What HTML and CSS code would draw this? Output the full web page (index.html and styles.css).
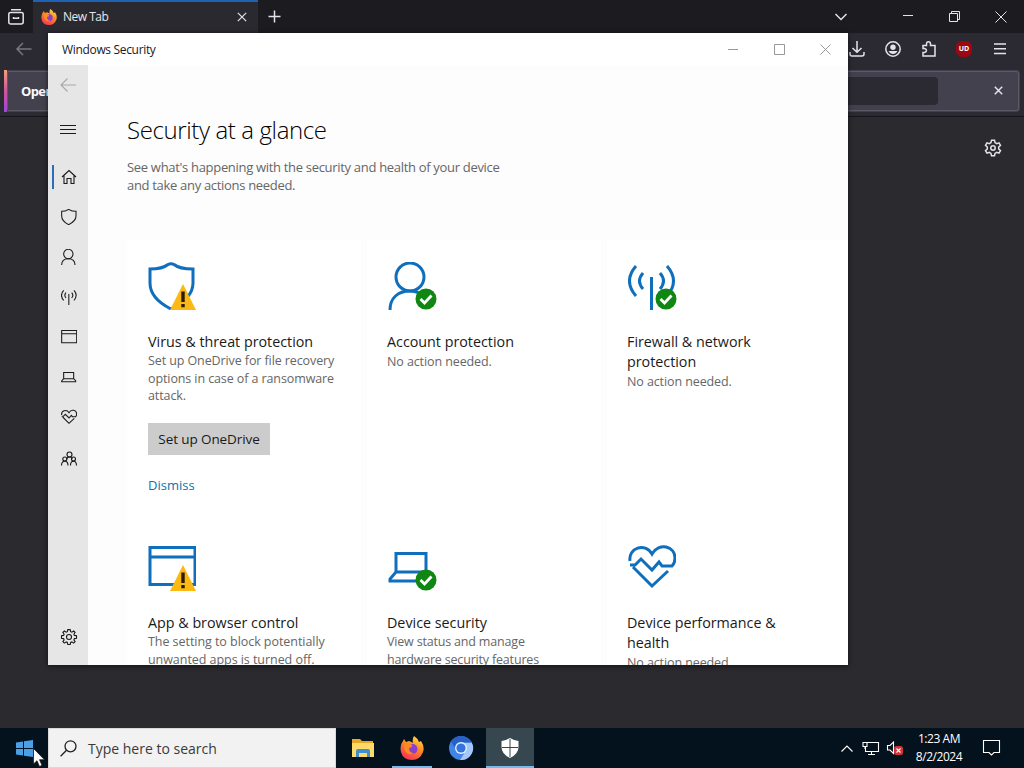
FILE: index.html
```
<!DOCTYPE html>
<html lang="en">
<head>
  <meta charset="UTF-8" />
  <meta name="viewport" content="width=device-width, initial-scale=1.0" />
  <title>Windows Security</title>
  <link rel="stylesheet" href="styles.css">
</head>
<body>

  <!-- icons shared by the side menu and the cards -->
  <svg class="defs" width="0" height="0">
    <symbol id="shield" viewBox="0 0 48 48"><path d="M2 7C11 7 17 5 20 2.500Q23 1 26 2.500C29 5 35 7 45 7V21C45 33 35 41 23 47C11 41 2 33 2 21Z"/></symbol>
    <symbol id="person" viewBox="0 0 48 48"><circle cx="22" cy="15" r="14"/><path d="M2 48C2 36 10 29 22 29S42 36 42 48"/></symbol>
    <symbol id="person-cut" viewBox="0 0 48 48"><circle cx="22" cy="15" r="14"/><path d="M2 48C2 36 10 29 22 29Q29 29 34 33"/></symbol>
    <symbol id="signal" viewBox="0 0 48 48"><path d="M23.500 15V48M15 11Q8 19 15 27M32 11Q39 19 32 27M8 4Q-5 19 8 34M39 4Q52 19 39 34"/></symbol>
    <symbol id="app" viewBox="0 0 48 48"><path d="M2 4.500H47V41.500H2ZM2 14H47"/></symbol>
    <symbol id="laptop" viewBox="0 0 48 48"><path d="M8 10.500H38V29H8ZM8 29L2 36V38H44V35L38 29"/></symbol>
    <symbol id="heart" viewBox="0 0 48 48"><path d="M2 18C0 5 17-1 24 11C31-1 47 3 47 15C47 19 46 21 44 23H34L31 19L24 27L13 16L7 22H2M5 24L24 43L40 28"/></symbol>
  </svg>

  <div class="browser">
    <div class="tabstrip">
      <svg class="archive" width="16" height="16" viewBox="0 0 16 16"><path d="M3 .8H13M2.500 3.500H13.500Q15.200 3.500 15.200 5V13Q15.200 15 13 15H3Q.8 15 .8 13V5Q.8 3.500 2.500 3.500M5.500 8V9.200H10.500V8"/></svg>
      <div class="tab">
        <svg class="fox" width="16" height="16" viewBox="0 0 24 24"><use href="#fox"/></svg>
        <span>New Tab</span>
        <svg class="tab-close" width="10" height="10" viewBox="0 0 10 10"><path d="M.8.800L9.200 9.200M9.200.8L.8 9.200"/></svg>
      </div>
      <svg class="plus" width="13" height="13" viewBox="0 0 13 13"><path d="M6.500.5V12.500M.5 6.500H12.500"/></svg>
      <div class="frame-buttons">
        <svg width="12" height="12" viewBox="0 0 12 12"><path class="thick" d="M.5 3L6 8.500L11.500 3"/></svg>
        <svg class="min" width="11" height="11" viewBox="0 0 11 11"><path d="M0 4.500H10"/></svg>
        <svg width="11" height="11" viewBox="0 0 11 11"><path d="M.5 2.500H8.500V10.500H.5ZM2.500 2.500V.5H10.500V8.500H8.500"/></svg>
        <svg width="12" height="12" viewBox="0 0 12 12"><path d="M.5.5L11.500 11.500M11.500.5L.5 11.500"/></svg>
      </div>
    </div>

    <div class="toolbar">
      <svg class="nav-back" width="16" height="14" viewBox="0 0 16 14"><path d="M15.500 7H1M7 1L1 7L7 13"/></svg>
      <div class="tools">
        <svg width="16" height="16" viewBox="0 0 16 16"><path d="M8 0V11M3.500 7L8 11.300L12.500 7M1 11V13Q1 15 3 15H13Q15 15 15 13V11"/></svg>
        <svg width="16" height="16" viewBox="0 0 16 16"><circle cx="8" cy="8" r="7.200"/><circle class="solid" cx="8" cy="6.200" r="2.700"/><path class="solid" d="M3.500 10H12.500Q11 13 8 13T3.500 10Z"/></svg>
        <svg width="16" height="16" viewBox="0 0 16 16"><path d="M2 15V11.500H3.500Q5.500 11 5.500 9.500T3.500 7.500H2V4.500H5.500V3Q5.500.8 7.500.8T9.500 3V4.500H14V15Z"/></svg>
        <span class="ublock">UD</span>
        <svg width="14" height="14" viewBox="0 0 14 14"><path d="M1 2H13M1 6.800H13M1 11.500H13"/></svg>
      </div>
    </div>

    <div class="notice">
      <strong>Open</strong>
      <div class="notice-field"></div>
      <svg width="9" height="9" viewBox="0 0 9 9"><path d="M.8.800L8.200 8.200M8.200.8L.8 8.200"/></svg>
    </div>

    <div class="newtab">
      <svg width="18" height="18" viewBox="0 0 18 18"><path d="M7.500 1.200H10.500L11 3.600L12.700 4.600L15 3.800L16.500 6.400L14.700 8V10L16.500 11.600L15 14.200L12.700 13.400L11 14.400L10.500 16.800H7.500L7 14.400L5.300 13.400L3 14.200L1.500 11.600L3.300 10V8L1.500 6.400L3 3.800L5.300 4.600L7 3.600Z"/><circle cx="9" cy="9" r="2.200"/></svg>
    </div>
  </div>

  <div class="window">
    <div class="titlebar">
      <span>Windows Security</span>
      <div class="window-buttons">
        <svg width="11" height="11" viewBox="0 0 11 11"><path d="M0 5.500H10"/></svg>
        <svg width="11" height="11" viewBox="0 0 11 11"><path d="M.5.5H10.500V10.500H.5Z"/></svg>
        <svg width="11" height="11" viewBox="0 0 11 11"><path d="M.5.5L10.500 10.500M10.500.5L.5 10.500"/></svg>
      </div>
    </div>

    <div class="window-body">
      <nav class="sidebar">
        <a class="item back"><svg width="16" height="14" viewBox="0 0 16 14"><path d="M16 7H1M7.500 .5L1 7L7.500 13.500"/></svg></a>
        <a class="item menu"><svg width="16" height="9" viewBox="0 0 16 9"><path d="M0 .5H16M0 4.500H16M0 8.500H16"/></svg></a>
        <a class="item active"><svg width="16" height="16" viewBox="0 0 16 16"><path d="M1 8L8 1.500L15 8M3 6.500V14.500H6V9.500H10V14.500H13V6.500"/></svg></a>
        <a class="item"><svg width="16" height="16"><use href="#shield"/></svg></a>
        <a class="item"><svg width="16" height="16"><use href="#person"/></svg></a>
        <a class="item"><svg width="16" height="16"><use href="#signal"/></svg></a>
        <a class="item"><svg width="16" height="16"><use href="#app"/></svg></a>
        <a class="item"><svg width="16" height="16"><use href="#laptop"/></svg></a>
        <a class="item"><svg width="16" height="16"><use href="#heart"/></svg></a>
        <a class="item family"><svg width="16" height="16" viewBox="0 0 16 16"><circle cx="8.500" cy="3.500" r="2.500"/><circle cx="3.800" cy="8" r="2"/><circle cx="12.500" cy="8" r="2"/><path d="M.5 14.500Q.5 10.300 3.800 10.300T7 14.500M9.500 14.500Q9.500 10.300 12.500 10.300T15.500 14.500M5.700 8.500Q6 6 8.500 6T11 8"/></svg></a>
        <a class="item settings"><svg width="16" height="16" viewBox="0 0 16 16"><path d="M6.800.6H9.200L9.600 2.700L10.900 3.200L12.700 2L14.100 3.400L12.900 5.200L13.400 6.400L15.500 6.800V9.200L13.400 9.600L12.900 10.900L14.100 12.700L12.600 14.100L10.900 12.900L9.600 13.400L9.200 15.500H6.800L6.400 13.400L5.200 12.900L3.400 14.100L1.900 12.700L3.100 10.900L2.600 9.600L.5 9.200V6.800L2.600 6.400L3.100 5.200L1.900 3.400L3.400 2L5.200 3.200L6.400 2.700Z"/><circle cx="8" cy="8" r="2.500"/></svg></a>
      </nav>

      <main class="content">
        <h1>Security at a glance</h1>
        <p class="intro">See what's happening with the security and health of your device<br>and take any actions needed.</p>

        <div class="cards">
          <section class="card">
            <div class="card-icon"><svg width="48" height="48"><use href="#shield"/></svg><svg class="badge" width="26" height="26" viewBox="0 0 26 26"><use href="#warn"/></svg></div>
            <h2>Virus &amp; threat protection</h2>
            <p>Set up OneDrive for file recovery<br>options in case of a ransomware<br>attack.</p>
            <button>Set up OneDrive</button>
            <a class="dismiss">Dismiss</a>
          </section>
          <section class="card">
            <div class="card-icon"><svg width="48" height="48"><use href="#person-cut"/></svg><svg class="badge ok" width="22" height="22" viewBox="0 0 22 22"><use href="#check"/></svg></div>
            <h2>Account protection</h2>
            <p>No action needed.</p>
          </section>
          <section class="card">
            <div class="card-icon"><svg width="48" height="48"><use href="#signal"/></svg><svg class="badge ok" width="22" height="22" viewBox="0 0 22 22"><use href="#check"/></svg></div>
            <h2>Firewall &amp; network<br>protection</h2>
            <p>No action needed.</p>
          </section>
          <section class="card">
            <div class="card-icon"><svg width="48" height="48"><use href="#app"/></svg><svg class="badge" width="26" height="26" viewBox="0 0 26 26"><use href="#warn"/></svg></div>
            <h2>App &amp; browser control</h2>
            <p>The setting to block potentially<br>unwanted apps is turned off.</p>
          </section>
          <section class="card">
            <div class="card-icon"><svg width="48" height="48"><use href="#laptop"/></svg><svg class="badge ok" width="22" height="22" viewBox="0 0 22 22"><use href="#check"/></svg></div>
            <h2>Device security</h2>
            <p>View status and manage<br>hardware security features</p>
          </section>
          <section class="card">
            <div class="card-icon"><svg width="48" height="48"><use href="#heart"/></svg></div>
            <h2>Device performance &amp;<br>health</h2>
            <p>No action needed.</p>
          </section>
        </div>
      </main>
    </div>
  </div>

  <div class="taskbar">
    <div class="start">
      <svg width="17" height="17" viewBox="0 0 17 17"><path d="M0 2.400L7 1.400V8H0ZM8 1.200L17 0V8H8ZM0 9H7V15.600L0 14.600ZM8 9H17V17L8 15.800Z"/></svg>
    </div>
    <div class="search">
      <svg width="17" height="17" viewBox="0 0 17 17"><circle cx="10.500" cy="6.300" r="5.500"/><path d="M6.500 10.300L.6 16.300"/></svg>
      <span>Type here to search</span>
    </div>
    <div class="apps">
      <div class="app">
        <svg width="22" height="20" viewBox="0 0 22 20"><path fill="#e8a825" d="M0 1H8L10 3H21V19H0Z"/><path fill="#ffda68" d="M0 5H22V19H0Z"/><path fill="#3f8fd0" d="M4 19V13Q4 11 6 11H16Q18 11 18 13V19H15V15H7V19Z"/></svg>
      </div>
      <div class="app running">
        <svg width="24" height="24" viewBox="0 0 24 24"><use href="#fox"/></svg>
      </div>
      <div class="app">
        <svg width="24" height="24" viewBox="0 0 24 24"><circle cx="12" cy="12" r="12" fill="#4285e8"/><path fill="#a5c8fa" d="M12 6.500H22.700A12 12 0 0 1 11 24L17 14.500Z"/><path fill="#2861c4" d="M2 5.500A12 12 0 0 1 22.700 6.500H12L7 14Z"/><circle cx="12" cy="12" r="6" fill="#e6f0ff"/><circle cx="12" cy="12" r="4.600" fill="#3474dc"/></svg>
      </div>
      <div class="app running current">
        <svg width="18" height="20" viewBox="0 0 18 20"><path fill="#fff" d="M9 0Q13 2.500 17.500 3V9Q17.500 16 9 20Q.5 16 .5 9V3Q5 2.500 9 0Z"/><path stroke="#37474f" d="M9 1V19M1 9.500H17"/></svg>
      </div>
    </div>
    <div class="tray">
      <svg class="chevron" width="12" height="7" viewBox="0 0 12 7"><path d="M.5 6.500L6 1L11.500 6.500"/></svg>
      <svg class="network" width="17" height="14" viewBox="0 0 17 14"><path d="M5.500 1.500H16.500V10.500H3.500V6M9.500 10.500V13.500M6 13.500H13M1 1.500H5V5.500H1ZM3 5.500V8"/></svg>
      <svg class="sound" width="16" height="14" viewBox="0 0 16 14"><path d="M.5 4.500H3L6.500 1V12.500L3 9H.5Z"/><rect x="7" y="5" width="9" height="9" rx="2.500" fill="#d13438" stroke="none"/><path d="M9.500 7.500L13.500 11.500M13.500 7.500L9.500 11.500"/></svg>
      <div class="clock">1:23 AM<br>8/2/2024</div>
      <svg class="action" width="17" height="17" viewBox="0 0 17 17"><path d="M.5 .5H16.500V12.500H11L8.500 15L6 12.500H.5Z"/></svg>
    </div>
  </div>

  <svg class="cursor" width="12" height="19" viewBox="0 0 12 19"><path d="M.5.5V16L4 12.700L6.500 18.500L9 17.300L6.500 11.700H11.500Z"/></svg>

  <svg class="defs" width="0" height="0">
    <linearGradient id="flame" x1=".8" y1="0" x2=".3" y2="1">
      <stop offset="0" stop-color="#ffe24a"/>
      <stop offset=".45" stop-color="#ff8a22"/>
      <stop offset="1" stop-color="#f5315b"/>
    </linearGradient>
    <symbol id="fox" viewBox="0 0 24 24">
      <path fill="url(#flame)" d="M14 0Q18 2.500 19 6L21 5Q25 11 23 16Q20 24 12 24Q3 24 1 16Q-.5 9 3 5L4 3L6 6L9 5Q12 6 13 7Q12 3 14 0Z"/>
      <circle cx="12.500" cy="13" r="5" fill="#8a3fd1"/>
      <path fill="#ff8a22" d="M4 8Q8 6 12 9Q13 11 9 12Q9 17 14 17Q8 20 5 15Z"/>
    </symbol>
    <symbol id="warn" viewBox="0 0 26 26">
      <path fill="#fcb813" stroke="none" d="M13 0L26 26H0Z"/>
      <path fill="#2b1b00" stroke="none" d="M11.300 7.500H14.700V18H11.300ZM11.300 20H14.700V23.300H11.300Z"/>
    </symbol>
    <symbol id="check" viewBox="0 0 22 22">
      <circle cx="11" cy="11" r="10.500" fill="#0f8712" stroke="none"/>
      <path fill="none" stroke="#fff" stroke-width="2.800" d="M5.500 11L9.500 15L16.500 7.500"/>
    </symbol>
  </svg>
</body>
</html>
```
FILE: styles.css
```
* {
  box-sizing: border-box;
}

body {
  margin: 0;
  width: 1024px;
  height: 768px;
  overflow: hidden;
  display: flex;
  flex-direction: column;
  background: #2b2a2f;
  font-family: 'Open Sans', 'Noto Sans', sans-serif;
}

svg {
  display: block;
  flex: none;
  overflow: visible;
}

.defs {
  position: absolute;
}

/* browser behind the window */

.browser {
  flex: 1;
  display: flex;
  flex-direction: column;
  background: #2b2a33;
  color: #e6e6ea;
}

.browser svg:not(.fox) {
  fill: none;
  stroke: #e4e4e8;
  stroke-width: 1.5;
}

.browser .solid {
  fill: #e4e4e8;
  stroke: none;
}

.tabstrip {
  height: 33px;
  display: flex;
  align-items: center;
  padding-left: 8px;
  background: #1c1b20;
}

.tab {
  width: 225px;
  height: 33px;
  margin-left: 9px;
  padding: 0 11px 2px 8px;
  display: flex;
  align-items: center;
  gap: 6px;
  border-top: 2px solid #1e62b4;
  background: #2a2930;
  font-size: 12px;
  letter-spacing: -0.5px;
}

.browser .tab .tab-close {
  margin-left: auto;
  stroke-width: 1.2;
}

.browser .plus {
  margin-left: 10px;
}

.frame-buttons {
  margin-left: auto;
  margin-right: 17px;
  display: flex;
  align-items: center;
  gap: 35px;
}

.browser .frame-buttons svg {
  stroke-width: 1;
}

.browser .frame-buttons .thick {
  stroke-width: 1.5;
}

.frame-buttons .min {
  margin-left: 21px;
}

.toolbar {
  height: 33px;
  display: flex;
  align-items: center;
  justify-content: space-between;
  padding: 0 17px 1px 16px;
}

.browser .toolbar .nav-back {
  stroke: #77767e;
}

.tools {
  display: flex;
  align-items: center;
  gap: 20px;
}

.ublock {
  width: 16px;
  height: 16px;
  margin: 0 1px 0 -1px;
  border-radius: 6px;
  background: #9c0710;
  color: #fff;
  font-size: 7px;
  font-weight: bold;
  line-height: 15px;
  text-align: center;
}

.notice {
  height: 42px;
  margin: 4px 4px 0;
  padding: 0 16px 1px 14px;
  display: flex;
  align-items: center;
  border: 1px solid #5b5966;
  border-left: 3px solid;
  border-image: linear-gradient(#f4a27a, #d0549c 50%, #9a45e0) 1 / 0 0 0 3px;
  background: #42414d;
  box-shadow: inset 0 0 0 1px #5b5966;
  border-radius: 4px;
  font-size: 13px;
}

.notice strong {
  color: #fbfbfe;
  letter-spacing: -0.6px;
}

.notice-field {
  width: 560px;
  height: 28px;
  margin-left: auto;
  margin-right: 56px;
  border-radius: 4px;
  background: #2b2a33;
}

.newtab {
  flex: 1;
  margin-top: 4px;
  padding: 22px 22px 0 0;
  display: flex;
  justify-content: flex-end;
  border-top: 1px solid #15141a;
  background: #2b2a2f;
}

/* security window */

.window {
  position: absolute;
  left: 48px;
  top: 33px;
  width: 800px;
  height: 632px;
  display: flex;
  flex-direction: column;
  background: #fff;
  color: #1a1a1a;
  box-shadow: 0 1px 5px rgba(0, 0, 0, 0.6);
}

.titlebar {
  height: 32px;
  padding: 0 17px 0 14px;
  display: flex;
  align-items: center;
  justify-content: space-between;
  font-size: 12px;
  letter-spacing: -0.33px;
}

.window-buttons {
  display: flex;
  gap: 35px;
}

.window-buttons svg {
  fill: none;
  stroke: #999;
}

.window-body {
  flex: 1;
  min-height: 0;
  display: flex;
}

.sidebar {
  width: 40px;
  display: flex;
  flex-direction: column;
  background: #e6e6e6;
}

.item {
  height: 40px;
  display: flex;
  align-items: center;
  justify-content: center;
  padding-left: 2px;
  fill: none;
  stroke: #1a1a1a;
  stroke-width: 1.1;
}

.item use {
  stroke-width: 3.2;
}

.back {
  padding-left: 0;
  stroke: #a8a8a8;
}

.menu {
  height: 48px;
  padding-left: 0;
}

.active {
  margin-top: 4px;
  padding-left: 0;
}

.active::before {
  content: '';
  width: 2px;
  height: 24px;
  margin-right: 7px;
  margin-left: -7px;
  background: #2a70b8;
}

.family {
  margin-top: 2px;
}

.settings {
  margin-top: auto;
  margin-bottom: 8px;
}

.content {
  flex: 1;
  overflow: hidden;
  padding: 49px 0 0 39px;
  background: #fdfdfd;
}

.content h1 {
  margin: 0;
  font-size: 24px;
  font-weight: 300;
  line-height: 32px;
  letter-spacing: -0.38px;
  color: #000;
}

.intro {
  margin: 12px 0 0;
  color: #666;
  font-size: 13px;
  line-height: 18px;
  letter-spacing: -0.31px;
}

.cards {
  margin-top: 46px;
  display: grid;
  grid-template-columns: 234px 234px 250px;
  grid-template-rows: 281px 281px;
  column-gap: 6px;
}

.card {
  padding: 22px 0 0 21px;
  background: #fff;
  white-space: nowrap;
}

.card:nth-child(3n + 2),
.card:nth-child(3n) {
  padding-left: 20px;
}

.card-icon {
  position: relative;
  width: 48px;
  height: 48px;
  fill: none;
  stroke: #0f6fbd;
  stroke-width: 3;
}

.card:nth-child(3n + 2) .card-icon,
.card:nth-child(3n) .card-icon {
  margin-left: 1px;
}

.badge {
  position: absolute;
  right: 0;
  bottom: 0;
}

.ok {
  right: -1px;
}

.card h2 {
  margin: 22px 0 0;
  font-size: 14.300px;
  font-weight: 400;
  line-height: 20px;
}

.card p {
  margin: 0;
  color: #666;
  font-size: 12.500px;
  line-height: 17.500px;
  letter-spacing: -0.1px;
}

.card:nth-child(2) p,
.card:nth-child(3) p,
.card:nth-child(6) p {
  margin-top: 1px;
}

.card:nth-child(4) p {
  letter-spacing: -0.05px;
}

.card:nth-child(5) p {
  letter-spacing: -0.18px;
}

.card button {
  display: block;
  width: 122px;
  height: 32px;
  margin: 18px 0 20px;
  padding: 0;
  border: 0;
  background: #ccc;
  color: #1a1a1a;
  font: inherit;
  font-size: 13.500px;
  letter-spacing: -0.1px;
}

.dismiss {
  display: block;
  color: #0f6fb0;
  font-size: 13px;
  line-height: 20px;
}

/* taskbar */

.taskbar {
  height: 40px;
  display: flex;
  background: #04121d;
  color: #fff;
}

.start {
  width: 48px;
  display: flex;
  align-items: center;
  justify-content: center;
  fill: #4aa0e6;
}

.search {
  width: 288px;
  display: flex;
  align-items: center;
  gap: 11px;
  padding-left: 11px;
  border: 1px solid #d8d8d8;
  background: #f2f2f2;
  color: #3a3a3a;
  font-size: 14px;
}

.search svg {
  fill: none;
  stroke: #222;
  stroke-width: 1.3;
}

.apps {
  display: flex;
  padding-left: 2px;
}

.app {
  width: 49px;
  height: 40px;
  display: flex;
  align-items: center;
  justify-content: center;
}

.running {
  background: linear-gradient(#76b9ed, #76b9ed) center bottom / 40px 2px no-repeat;
}

.current {
  width: 48px;
  margin-left: 1px;
  background: linear-gradient(#76b9ed, #76b9ed) center bottom / 48px 2px no-repeat #37474f;
}

.tray {
  margin-left: auto;
  padding-right: 24px;
  display: flex;
  align-items: center;
}

.tray svg {
  fill: none;
  stroke: #fff;
  stroke-width: 1.1;
}

.network {
  margin-left: 9px;
}

.sound {
  margin-left: 8px;
}

.clock {
  width: 72px;
  font-size: 12px;
  line-height: 18px;
  letter-spacing: -0.45px;
  text-align: center;
}

.action {
  margin-left: 8px;
}

.cursor {
  position: absolute;
  left: 33px;
  top: 748px;
  fill: #fff;
  stroke: #111;
  stroke-width: 0.7;
}
```
